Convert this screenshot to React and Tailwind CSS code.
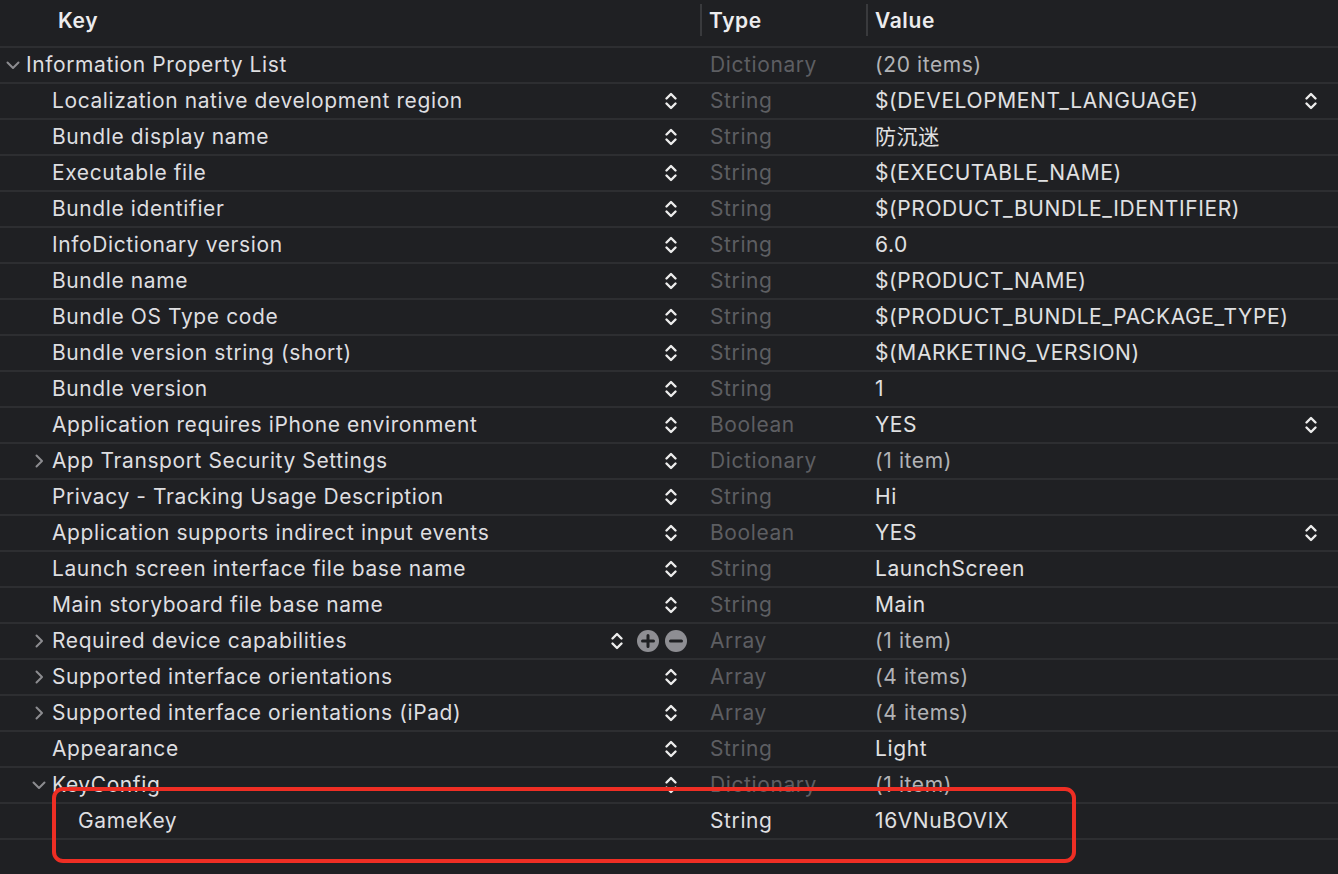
import React from 'react'

const rows = [
  { level: 0, disc: 'open', key: 'Information Property List', type: 'Dictionary', value: '(20 items)', count: true, noStep: true },
  { level: 1, key: 'Localization native development region', type: 'String', value: '$(DEVELOPMENT_LANGUAGE)', valueStep: true },
  { level: 1, key: 'Bundle display name', type: 'String', value: '防沉迷' },
  { level: 1, key: 'Executable file', type: 'String', value: '$(EXECUTABLE_NAME)' },
  { level: 1, key: 'Bundle identifier', type: 'String', value: '$(PRODUCT_BUNDLE_IDENTIFIER)' },
  { level: 1, key: 'InfoDictionary version', type: 'String', value: '6.0' },
  { level: 1, key: 'Bundle name', type: 'String', value: '$(PRODUCT_NAME)' },
  { level: 1, key: 'Bundle OS Type code', type: 'String', value: '$(PRODUCT_BUNDLE_PACKAGE_TYPE)' },
  { level: 1, key: 'Bundle version string (short)', type: 'String', value: '$(MARKETING_VERSION)' },
  { level: 1, key: 'Bundle version', type: 'String', value: '1' },
  { level: 1, key: 'Application requires iPhone environment', type: 'Boolean', value: 'YES', valueStep: true },
  { level: 1, disc: 'closed', key: 'App Transport Security Settings', type: 'Dictionary', value: '(1 item)', count: true },
  { level: 1, key: 'Privacy - Tracking Usage Description', type: 'String', value: 'Hi' },
  { level: 1, key: 'Application supports indirect input events', type: 'Boolean', value: 'YES', valueStep: true },
  { level: 1, key: 'Launch screen interface file base name', type: 'String', value: 'LaunchScreen' },
  { level: 1, key: 'Main storyboard file base name', type: 'String', value: 'Main' },
  { level: 1, disc: 'closed', key: 'Required device capabilities', type: 'Array', value: '(1 item)', count: true, hover: true },
  { level: 1, disc: 'closed', key: 'Supported interface orientations', type: 'Array', value: '(4 items)', count: true },
  { level: 1, disc: 'closed', key: 'Supported interface orientations (iPad)', type: 'Array', value: '(4 items)', count: true },
  { level: 1, key: 'Appearance', type: 'String', value: 'Light' },
  { level: 1, disc: 'open', key: 'KeyConfig', type: 'Dictionary', value: '(1 item)', count: true },
  { level: 2, key: 'GameKey', type: 'String', value: '16VNuBOVIX', noStep: true, bright: true },
]

function Stepper() {
  return (
    <svg width="14" height="18" viewBox="0 0 14 18" fill="none" stroke="#ececec" strokeWidth="2.4" strokeLinecap="round" strokeLinejoin="round">
      <path d="M2.5 6.5 L7 2 L11.5 6.5" />
      <path d="M2.5 11.5 L7 16 L11.5 11.5" />
    </svg>
  )
}

function Disclosure({ open }) {
  return (
    <svg width="14" height="14" viewBox="0 0 14 14" fill="none" stroke="#8c8c90" strokeWidth="2" strokeLinecap="round" strokeLinejoin="round">
      {open ? <path d="M1.5 4.5 L7 10 L12.5 4.5" /> : <path d="M4.5 1.5 L10 7 L4.5 12.5" />}
    </svg>
  )
}

function RoundButton({ minus }) {
  return (
    <svg width="22" height="22" viewBox="0 0 22 22">
      <circle cx="11" cy="11" r="11" fill="#8e8e93" />
      <path d={minus ? 'M5.5 11 H16.5' : 'M5.5 11 H16.5 M11 5.5 V16.5'} stroke="#1f2023" strokeWidth="3" strokeLinecap="round" />
    </svg>
  )
}

function Row({ row }) {
  const indent = row.level === 0 ? 'pl-0' : row.level === 1 ? 'pl-[26px]' : 'pl-[52px]'
  return (
    <div className="grid grid-cols-[700px_166px_1fr] h-[36px] border-t-2 border-[#2d2e31]">
      <div className={`flex items-center ${indent} ${row.hover ? 'pr-[13px]' : 'pr-[22px]'}`}>
        <div className="w-[26px] flex justify-center shrink-0">
          {row.disc && <Disclosure open={row.disc === 'open'} />}
        </div>
        <span className="flex-1 text-[#dedee0] whitespace-nowrap pb-[2px]">{row.key}</span>
        {row.hover ? (
          <div className="flex items-center">
            <Stepper />
            <div className="ml-[13px]"><RoundButton /></div>
            <div className="ml-[6px]"><RoundButton minus /></div>
          </div>
        ) : (
          !row.noStep && <Stepper />
        )}
      </div>
      <div className={`flex items-center pl-[10px] pb-[2px] ${row.bright ? 'text-[#dedee0]' : 'text-[#5d5e62]'}`}>
        {row.type}
      </div>
      <div className="flex items-center pl-[9px] pr-[20px]">
        <span className={`flex-1 whitespace-nowrap pb-[2px] ${row.count ? 'text-[#b2b3b6]' : 'text-[#e0e0e2]'}`}>{row.value}</span>
        {row.valueStep && <Stepper />}
      </div>
    </div>
  )
}

export default function App() {
  return (
    <div className="relative w-[1338px] h-[874px] overflow-hidden bg-[#1f2023] text-[21px] tracking-[0.6px] font-['Inter','Noto_Sans_CJK_SC',sans-serif] leading-none">
      <div className="grid grid-cols-[700px_166px_1fr] h-[46px] font-semibold text-[#ececee]">
        <div className="flex items-center pl-[58px] pb-[6px]">Key</div>
        <div className="flex items-center pb-[6px]">
          <div className="w-[2px] h-[32px] bg-[#393a3d] mr-[7px]" />
          Type
        </div>
        <div className="flex items-center pb-[6px]">
          <div className="w-[2px] h-[32px] bg-[#393a3d] mr-[7px]" />
          Value
        </div>
      </div>
      {rows.map((row, i) => (
        <Row key={i} row={row} />
      ))}
      <div className="border-t-2 border-[#2d2e31]" />
      <div className="absolute left-[52px] top-[787px] w-[1024px] h-[76px] border-[4px] border-[#ee2e24] rounded-[11px]" />
    </div>
  )
}
